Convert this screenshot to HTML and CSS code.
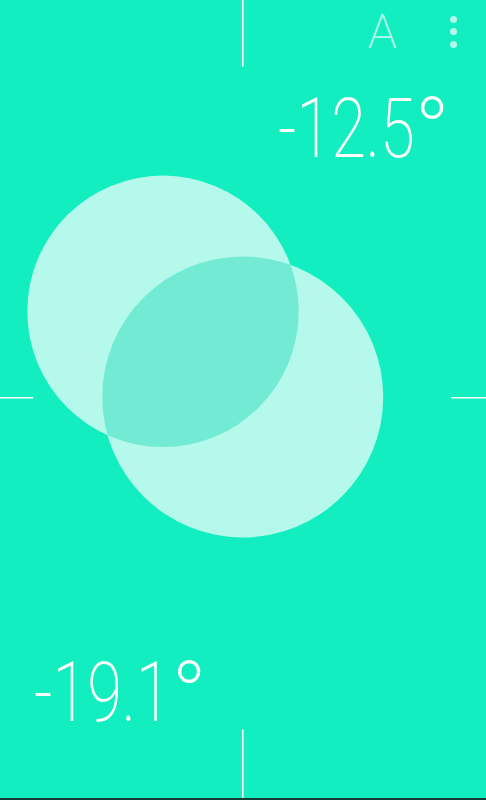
FILE: index.html
```html
<!DOCTYPE html>
<html lang="en">
<head>
<meta charset="utf-8">
<title>Level</title>
<link rel="stylesheet" href="styles.css">
</head>
<body>
<main class="stage">
  <svg class="canvas" width="486" height="798" viewBox="0 0 486 798" aria-hidden="true">
    <defs>
      <clipPath id="bubble-b">
        <circle cx="242.75" cy="397" r="140.5"/>
      </clipPath>
    </defs>
    <circle class="bubble" cx="163" cy="311.3" r="135.7"/>
    <circle class="bubble" cx="242.75" cy="397" r="140.5"/>
    <circle class="overlap" cx="163" cy="311.3" r="135.7" clip-path="url(#bubble-b)"/>
    <line class="tick" x1="242.75" y1="0" x2="242.75" y2="66.5"/>
    <line class="tick" x1="242.75" y1="729.5" x2="242.75" y2="798"/>
    <line class="tick" x1="0" y1="397.7" x2="33.3" y2="397.7"/>
    <line class="tick" x1="451" y1="397.7" x2="486" y2="397.7"/>
  </svg>

  <header class="toolbar">
    <span class="mode">A</span>
    <span class="menu" aria-label="More options"><i></i><i></i><i></i></span>
  </header>

  <div class="reading-row top"><span class="reading"><span class="num">-12.5</span><span class="deg">°</span></span></div>
  <div class="spacer"></div>
  <div class="reading-row bottom"><span class="reading"><span class="num">-19.1</span><span class="deg">°</span></span></div>
</main>
</body>
</html>
```

FILE: styles.css
```css
html, body {
  margin: 0;
  padding: 0;
  background: #13eec1;
  overflow: hidden;
}

.stage {
  position: relative;
  width: 486px;
  height: 800px;
  box-sizing: border-box;
  border-bottom: 2px solid #123f36;
  display: flex;
  flex-direction: column;
  font-family: Roboto, "Liberation Sans", sans-serif;
  font-weight: 100;
  color: #ffffff;
}

.canvas {
  position: absolute;
  left: 0;
  top: 0;
}

.bubble {
  fill: #b4f9eb;
}

.overlap {
  fill: #73ead3;
}

.tick {
  stroke: #ffffff;
  stroke-width: 1.6;
}

.toolbar {
  position: relative;
  display: flex;
  justify-content: flex-end;
  align-items: flex-start;
  gap: 53px;
  padding: 8px 29px 0 0;
  height: 48px;
}

.mode {
  font-size: 48px;
  line-height: 48px;
  color: #b4f9eb;
  font-weight: 200;
}

.menu {
  display: flex;
  flex-direction: column;
  gap: 5.5px;
  padding-top: 7.5px;
}

.menu i {
  display: block;
  width: 7px;
  height: 7px;
  border-radius: 50%;
  background: #b4f9eb;
}

.reading-row {
  position: relative;
  display: flex;
  font-size: 83px;
  line-height: 83px;
  height: 83px;
  font-weight: 200;
}

.reading {
  display: inline-flex;
}

.num {
  display: inline-block;
  transform: scaleX(0.76);
  transform-origin: left center;
  margin-right: -43px;
}

.deg {
  display: inline-block;
  transform: scale(1.15);
  transform-origin: 0 11px;
}

.reading-row.top {
  margin-top: 31px;
  justify-content: flex-end;
  padding-right: 40px;
}

.reading-row.bottom {
  margin-bottom: 64px;
  padding-left: 34px;
}

.spacer {
  flex: 1;
}
```
